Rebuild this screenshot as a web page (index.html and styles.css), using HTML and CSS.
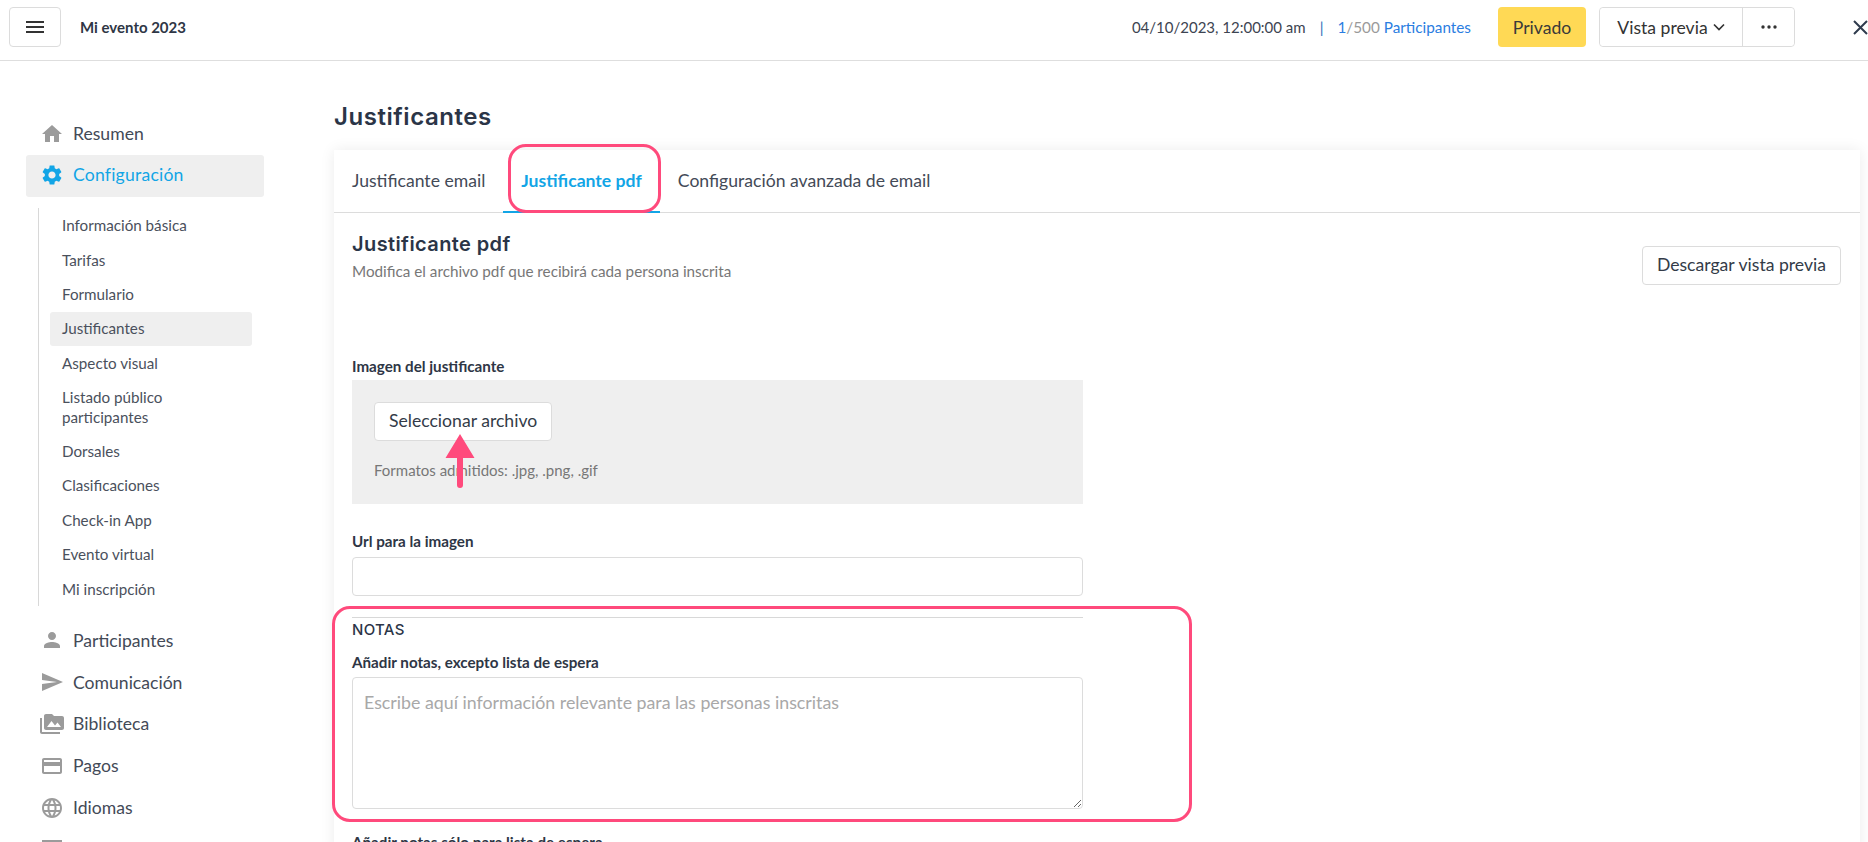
FILE: index.html
```html
<!DOCTYPE html>
<html lang="es">
<head>
<meta charset="utf-8">
<title>Justificantes</title>
<link rel="stylesheet" href="styles.css">
</head>
<body>
<header class="topbar">
  <button class="menu-btn" type="button" aria-label="Menú">
    <svg viewBox="0 0 24 24" width="24" height="24"><path d="M3 18h18v-2H3v2zm0-5h18v-2H3v2zm0-7v2h18V6H3z"/></svg>
  </button>
  <div class="event-name">Mi evento 2023</div>
  <div class="top-right">
    <span class="date">04/10/2023, 12:00:00 am</span>
    <span class="sep">|</span>
    <span class="count"><span class="cnt-blue">1</span><span class="cnt-gray">/500</span> Participantes</span>
    <button class="btn-private" type="button">Privado</button>
    <div class="btn-group">
      <button class="btn-preview" type="button">Vista previa
        <svg viewBox="0 0 12 8" width="12" height="8"><path d="M1 1.500 6 6.500l5-5" fill="none" stroke="#333" stroke-width="1.700"/></svg>
      </button>
      <button class="btn-more" type="button" aria-label="Más">
        <svg viewBox="0 0 18 4" width="18" height="4"><circle cx="3" cy="2" r="1.700"/><circle cx="9" cy="2" r="1.700"/><circle cx="15" cy="2" r="1.700"/></svg>
      </button>
    </div>
    <svg class="close-x" viewBox="0 0 15 15" width="15" height="15"><path d="M1 1l13 13M14 1 1 14" fill="none" stroke="#2f3b4d" stroke-width="2"/></svg>
  </div>
</header>

<div class="layout">
  <nav class="sidebar">
    <a class="nav-item"><svg class="nav-icon" viewBox="0 0 24 24"><path d="M10 20v-6h4v6h5v-8h3L12 3 2 12h3v8z"/></svg>Resumen</a>
    <a class="nav-item nav-active"><svg class="nav-icon" viewBox="0 0 24 24"><path d="M19.14 12.94c.04-.3.06-.61.06-.94 0-.32-.02-.64-.07-.94l2.03-1.58c.18-.14.23-.41.12-.61l-1.92-3.32c-.12-.22-.37-.29-.59-.22l-2.39.96c-.5-.38-1.03-.7-1.62-.94l-.36-2.54c-.04-.24-.24-.41-.48-.41h-3.84c-.24 0-.43.17-.47.41l-.36 2.54c-.59.24-1.13.57-1.62.94l-2.39-.96c-.22-.08-.47 0-.59.22L2.74 8.87c-.12.21-.08.47.12.61l2.03 1.58c-.05.3-.09.63-.09.94s.02.64.07.94l-2.03 1.58c-.18.14-.23.41-.12.61l1.92 3.32c.12.22.37.29.59.22l2.39-.96c.5.38 1.03.7 1.62.94l.36 2.54c.05.24.24.41.48.41h3.84c.24 0 .44-.17.47-.41l.36-2.54c.59-.24 1.13-.56 1.62-.94l2.39.96c.22.08.47 0 .59-.22l1.92-3.32c.12-.22.07-.47-.12-.61l-2.01-1.58zM12 15.6c-1.98 0-3.6-1.62-3.6-3.6s1.62-3.6 3.6-3.6 3.6 1.62 3.6 3.6-1.62 3.6-3.6 3.6z"/></svg>Configuración</a>
    <ul class="subnav">
      <li>Información básica</li>
      <li>Tarifas</li>
      <li>Formulario</li>
      <li class="sub-active">Justificantes</li>
      <li>Aspecto visual</li>
      <li>Listado público participantes</li>
      <li>Dorsales</li>
      <li>Clasificaciones</li>
      <li>Check-in App</li>
      <li>Evento virtual</li>
      <li>Mi inscripción</li>
    </ul>
    <a class="nav-item"><svg class="nav-icon" viewBox="0 0 24 24"><path d="M12 12c2.210 0 4-1.790 4-4s-1.790-4-4-4-4 1.790-4 4 1.790 4 4 4zm0 2c-2.670 0-8 1.340-8 4v2h16v-2c0-2.660-5.330-4-8-4z"/></svg>Participantes</a>
    <a class="nav-item"><svg class="nav-icon" viewBox="0 0 24 24"><path d="M2.010 21 23 12 2.010 3 2 10l15 2-15 2z"/></svg>Comunicación</a>
    <a class="nav-item"><svg class="nav-icon" viewBox="0 0 24 24"><path d="M2 6H0v5h.01L0 20c0 1.100.9 2 2 2h18v-2H2V6zm20-2h-8l-2-2H6c-1.100 0-1.990.9-1.990 2L4 16c0 1.100.9 2 2 2h16c1.100 0 2-.9 2-2V6c0-1.100-.9-2-2-2zM7 15l4.500-6 3.500 4.510 2.500-3.010L21 15H7z"/></svg>Biblioteca</a>
    <a class="nav-item"><svg class="nav-icon" viewBox="0 0 24 24"><path d="M20 4H4c-1.110 0-1.990.89-1.990 2L2 18c0 1.110.89 2 2 2h16c1.110 0 2-.89 2-2V6c0-1.110-.89-2-2-2zm0 14H4v-6h16v6zm0-10H4V6h16v2z"/></svg>Pagos</a>
    <a class="nav-item"><svg class="nav-icon" viewBox="0 0 24 24"><path d="M11.990 2C6.470 2 2 6.480 2 12s4.470 10 9.990 10C17.520 22 22 17.520 22 12S17.520 2 11.990 2zm6.930 6h-2.950c-.32-1.250-.78-2.450-1.380-3.560 1.840.63 3.370 1.910 4.330 3.560zM12 4.040c.83 1.200 1.480 2.530 1.910 3.960h-3.820c.43-1.430 1.080-2.760 1.910-3.960zM4.260 14C4.100 13.360 4 12.690 4 12s.1-1.360.26-2h3.380c-.08.66-.14 1.320-.14 2 0 .68.06 1.340.14 2H4.260zm.82 2h2.950c.32 1.250.78 2.450 1.380 3.560-1.840-.63-3.370-1.900-4.330-3.560zm2.950-8H5.080c.96-1.660 2.490-2.930 4.330-3.560C8.810 5.550 8.350 6.750 8.030 8zM12 19.960c-.83-1.200-1.480-2.530-1.910-3.960h3.820c-.43 1.430-1.080 2.760-1.910 3.960zM14.340 14H9.660c-.09-.66-.16-1.320-.16-2 0-.68.07-1.350.16-2h4.680c.09.65.16 1.320.16 2 0 .68-.07 1.340-.16 2zm.25 5.560c.6-1.110 1.060-2.310 1.380-3.560h2.950c-.96 1.650-2.490 2.930-4.330 3.560zM16.360 14c.08-.66.14-1.320.14-2 0-.68-.06-1.340-.14-2h3.380c.16.64.26 1.310.26 2s-.1 1.360-.26 2h-3.380z"/></svg>Idiomas</a>
    <a class="nav-item"><svg class="nav-icon" viewBox="0 0 24 24"><path d="M2 3h20v18H2z"/></svg></a>
  </nav>

  <main class="content">
    <h1 class="page-title">Justificantes</h1>
    <section class="card">
      <div class="tabs">
        <div class="tab">Justificante email</div>
        <div class="tab tab-active">Justificante pdf</div>
        <div class="tab">Configuración avanzada de email</div>
      </div>
      <div class="card-body">
        <div class="section-head">
          <div>
            <h2 class="section-title">Justificante pdf</h2>
            <p class="section-sub">Modifica el archivo pdf que recibirá cada persona inscrita</p>
          </div>
          <button class="btn-outline" type="button">Descargar vista previa</button>
        </div>
        <form class="form">
          <label class="field-label">Imagen del justificante</label>
          <div class="upload-box">
            <button class="btn-outline" type="button">Seleccionar archivo</button>
            <p class="upload-hint">Formatos admitidos: .jpg, .png, .gif</p>
          </div>
          <label class="field-label url-label">Url para la imagen</label>
          <input class="text-input" type="text">
          <hr class="divider">
          <div class="notes-title">NOTAS</div>
          <label class="field-label notes-label">Añadir notas, excepto lista de espera</label>
          <textarea class="text-area" placeholder="Escribe aquí información relevante para las personas inscritas"></textarea>
          <label class="field-label last-label">Añadir notas sólo para lista de espera</label>
        </form>
      </div>
    </section>
  </main>
</div>

<div class="mark mark-tab"></div>
<div class="mark mark-notes"></div>
<svg class="mark-arrow" viewBox="0 0 30 56" width="30" height="56"><path d="M15 0 29.500 24H18v27a3 3 0 0 1-6 0V24H.5z" fill="#ff4a7c"/></svg>
</body>
</html>
```
FILE: styles.css
```css
* { box-sizing: border-box; }
html, body { margin: 0; height: 842px; overflow: hidden; }
body {
  position: relative;
  background: #fff;
  color: #3a4250;
  font-family: Lato, "Liberation Sans", sans-serif;
  font-size: 14px;
}
button { font-family: inherit; cursor: pointer; }

/* top bar */
.topbar {
  display: flex;
  align-items: center;
  height: 61px;
  padding: 0 0 6px 9px;
  border-bottom: 1px solid #dedede;
}
.menu-btn {
  display: flex;
  align-items: center;
  justify-content: center;
  width: 52px;
  height: 40px;
  padding: 0;
  background: #fff;
  border: 1px solid #dcdcdc;
  border-radius: 4px;
}
.menu-btn svg { fill: #333; }
.event-name { margin-left: 19px; font-weight: 700; font-size: 15px; color: #2e3645; }
.top-right { display: flex; align-items: center; margin-left: auto; }
.date { color: #3d4451; font-size: 15px; }
.sep { margin: 0 14px 0 14px; color: #2b6cb8; font-size: 15px; }
.count { color: #2a7de1; font-size: 15.300px; }
.cnt-gray { color: #9a9a9a; }
.btn-private {
  width: 88px;
  height: 40px;
  margin-left: 27px;
  background: #ffd955;
  border: 0;
  border-radius: 4px;
  color: #3a3a3a;
  font-size: 17.600px;
}
.btn-group {
  display: flex;
  height: 40px;
  margin-left: 13px;
  border: 1px solid #dcdcdc;
  border-radius: 4px;
}
.btn-preview, .btn-more {
  display: flex;
  align-items: center;
  justify-content: center;
  padding: 0;
  background: #fff;
  border: 0;
  border-radius: 4px;
  color: #333;
}
.btn-preview { gap: 5px; width: 143px; font-size: 17.600px; border-right: 1px solid #dcdcdc; border-radius: 4px 0 0 4px; }
.btn-more { width: 51px; }
.btn-more svg { fill: #333; }
.close-x { margin: 0 0 0 58px; flex: none; }

/* layout */
.layout { display: flex; }
.sidebar { flex: none; width: 334px; padding: 52px 0 0 26px; }
.nav-item {
  display: flex;
  align-items: center;
  gap: 9px;
  width: 238px;
  height: 41.800px;
  padding-left: 14px;
  border-radius: 3px;
  color: #434a57;
  font-size: 17.600px;
}
.nav-icon { flex: none; width: 24px; height: 24px; fill: #9b9b9b; }
.nav-active { padding-bottom: 2px; background: #efefef; color: #12a5e6; letter-spacing: .2px; }
.nav-active .nav-icon { fill: #12a5e6; }
.subnav {
  margin: 11px 0 13px 12px;
  padding: 1px 0 0 11px;
  list-style: none;
  border-left: 1px solid #d8d8d8;
}
.subnav li {
  width: 202px;
  padding: 7.500px 30px 7.500px 12px;
  border-radius: 3px;
  color: #4a505c;
  font-size: 15.200px;
  line-height: 19.400px;
}
.subnav .sub-active { background: #efefef; }

/* main */
.content { flex: 1; min-width: 0; padding: 41px 8px 0 0; }
.page-title {
  margin: 0 0 19px;
  color: #2b3547;
  font-family: Inter, "Liberation Sans", sans-serif;
  font-size: 24px;
  font-weight: 600;
  letter-spacing: .55px;
  line-height: 29px;
}
.card { background: #fff; box-shadow: 0 0 14px rgba(0, 0, 0, .08); }
.tabs { display: flex; height: 63px; border-bottom: 1px solid #dcdcdc; }
.tab {
  display: flex;
  align-items: center;
  height: 63px;
  padding: 0 18px 2px;
  color: #434a57;
  font-size: 17.600px;
}
.tab-active { color: #12a5e6; font-weight: 700; border-bottom: 2px solid #12a5e6; padding-bottom: 0; }
.card-body { padding: 0 19px 0 18px; }
.section-head { display: flex; justify-content: space-between; align-items: flex-start; padding-top: 19px; }
.section-title {
  margin: 0;
  color: #2b3547;
  font-family: Inter, "Liberation Sans", sans-serif;
  font-size: 20px;
  font-weight: 600;
  letter-spacing: .4px;
  line-height: 24px;
}
.section-sub { margin: 5px 0 0; color: #777; font-size: 15.250px; line-height: 20px; }
.btn-outline {
  height: 39px;
  padding: 0 14px 2px;
  background: #fff;
  border: 1px solid #dcdcdc;
  border-radius: 4px;
  color: #333b48;
  font-size: 17.600px;
}
.section-head .btn-outline { margin-top: 14px; }
.form { width: 731px; margin-top: 71px; }
.field-label { display: block; color: #2e3645; font-weight: 700; font-size: 15.200px; line-height: 20px; }
.upload-box { height: 124px; margin-top: 4px; padding: 22px 22px 0; background: #efefef; }
.upload-hint { margin: 19px 0 0; color: #777; font-size: 15px; line-height: 20px; }
.url-label { margin-top: 27px; }
.text-input {
  display: block;
  width: 100%;
  height: 39px;
  margin-top: 6px;
  background: #fff;
  border: 1px solid #dcdcdc;
  border-radius: 4px;
}
.divider { height: 1px; margin: 21px 0 2px; border: 0; background: #d8d8d8; }
.notes-title {
  color: #2b3547;
  font-family: Inter, "Liberation Sans", sans-serif;
  font-size: 15px;
  font-weight: 500;
  letter-spacing: .3px;
  line-height: 20px;
}
.notes-label { margin-top: 12px; }
.text-area {
  display: block;
  width: 100%;
  height: 132px;
  margin-top: 5px;
  padding: 12px 11px;
  background: #fff;
  border: 1px solid #dcdcdc;
  border-radius: 4px;
  font-family: Lato, "Liberation Sans", sans-serif;
  font-size: 17.800px;
  line-height: 24px;
}
.text-area::placeholder { color: #a8a8a8; opacity: 1; }
.last-label { margin-top: 23px; }

/* annotations drawn over the screenshot */
.mark { position: absolute; border: 3px solid #ff4a7c; }
.mark-tab { left: 508px; top: 144px; width: 153px; height: 69px; border-radius: 18px; }
.mark-notes { left: 332px; top: 606px; width: 860px; height: 216px; border-radius: 18px; }
.mark-arrow { position: absolute; left: 445px; top: 434px; }
```
